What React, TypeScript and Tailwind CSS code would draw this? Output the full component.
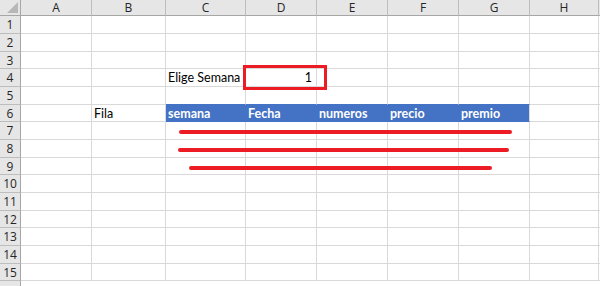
import React from "react";

// Excel-like sheet snapshot: columns A..H, rows 1..15 (col index 0 = A)
const COLS = ["A", "B", "C", "D", "E", "F", "G", "H", ""];
const ROWS = Array.from({ length: 15 }, (_, i) => i + 1);
const BLUE_COLS = [2, 3, 4, 5, 6];
const BLUE_TEXT: Record<number, string> = { 2: "semana", 3: "Fecha", 4: "numeros", 5: "precio", 6: "premio" };

function Cell({ row, col }: { row: number; col: number }) {
	const base = "border-r border-b border-[#d9d9d9] text-[12.5px] leading-[17px] text-black overflow-visible whitespace-nowrap";
	if (row === 6 && BLUE_COLS.includes(col)) {
		const last = col === 6;
		return (
			<div
				className={`bg-[#4472c4] border-b border-[#4472c4] pl-[2px] text-[12.5px] leading-[17px] font-bold text-white whitespace-nowrap ${
					last ? "border-r border-r-[#d9d9d9]" : "border-r border-r-[#4472c4]"
				}`}
			>
				{BLUE_TEXT[col]}
			</div>
		);
	}
	let content: React.ReactNode = null;
	let align = "pl-[2px]";
	if (row === 4 && col === 2) content = "Elige Semana";
	if (row === 4 && col === 3) {
		content = "1";
		align = "text-right pr-[4px]";
	}
	if (row === 6 && col === 1) content = "Fila";
	if (row === 5 && BLUE_COLS.includes(col)) {
		return <div className="border-r border-b border-[#d9d9d9] border-b-[#4472c4]" />;
	}
	return <div className={`${base} ${align}`}>{content}</div>;
}

export default function App() {
	return (
		<div className="relative w-[600px] h-[286px] overflow-hidden bg-white font-['Lato','Open_Sans',sans-serif]">
			<div className="grid grid-cols-[21px_71px_74px_80px_71px_71px_71px_71px_69px_1fr] grid-rows-[16px_18px_18px_17px_18px_18px_17px_18px_18px_17px_18px_18px_17px_18px_18px_17px_1fr] h-[286px]">
				{/* corner */}
				<div className="relative bg-[#e6e6e6] border-r border-b border-[#a6a6a6]">
					<svg className="absolute right-[2px] bottom-[2px]" width="11" height="11" viewBox="0 0 11 11">
						<polygon points="11,0 11,11 0,11" fill="#b7b7b7" />
					</svg>
				</div>
				{COLS.map((c, i) => (
					<div
						key={c + i}
						className="bg-[#e6e6e6] border-r border-r-[#bdbdbd] border-b border-b-[#a6a6a6] text-center text-[12px] leading-[15px] text-[#262626] font-['Open_Sans',sans-serif]"
					>
						{c}
					</div>
				))}
				{ROWS.map((r) => (
					<React.Fragment key={r}>
						<div className="bg-[#e6e6e6] border-r border-r-[#a6a6a6] border-b border-b-[#bdbdbd] text-center text-[12px] leading-[17px] text-[#262626] font-['Open_Sans',sans-serif]">
							{r}
						</div>
						{COLS.map((_, ci) => (
							<Cell key={ci} row={r} col={ci} />
						))}
					</React.Fragment>
				))}
				<div className="bg-[#e6e6e6] border-r border-[#a6a6a6]" />
			</div>

			{/* drawn annotations over the sheet */}
			<div className="absolute left-[243px] top-[65px] w-[84px] h-[25px] border-[3px] border-[#ed1c24]" />
			<div className="absolute left-[179px] top-[130px] w-[333px] h-[4px] rounded-full bg-[#ed1c24]" />
			<div className="absolute left-[178px] top-[148px] w-[331px] h-[4px] rounded-full bg-[#ed1c24]" />
			<div className="absolute left-[189px] top-[166px] w-[303px] h-[4px] rounded-full bg-[#ed1c24]" />
		</div>
	);
}
